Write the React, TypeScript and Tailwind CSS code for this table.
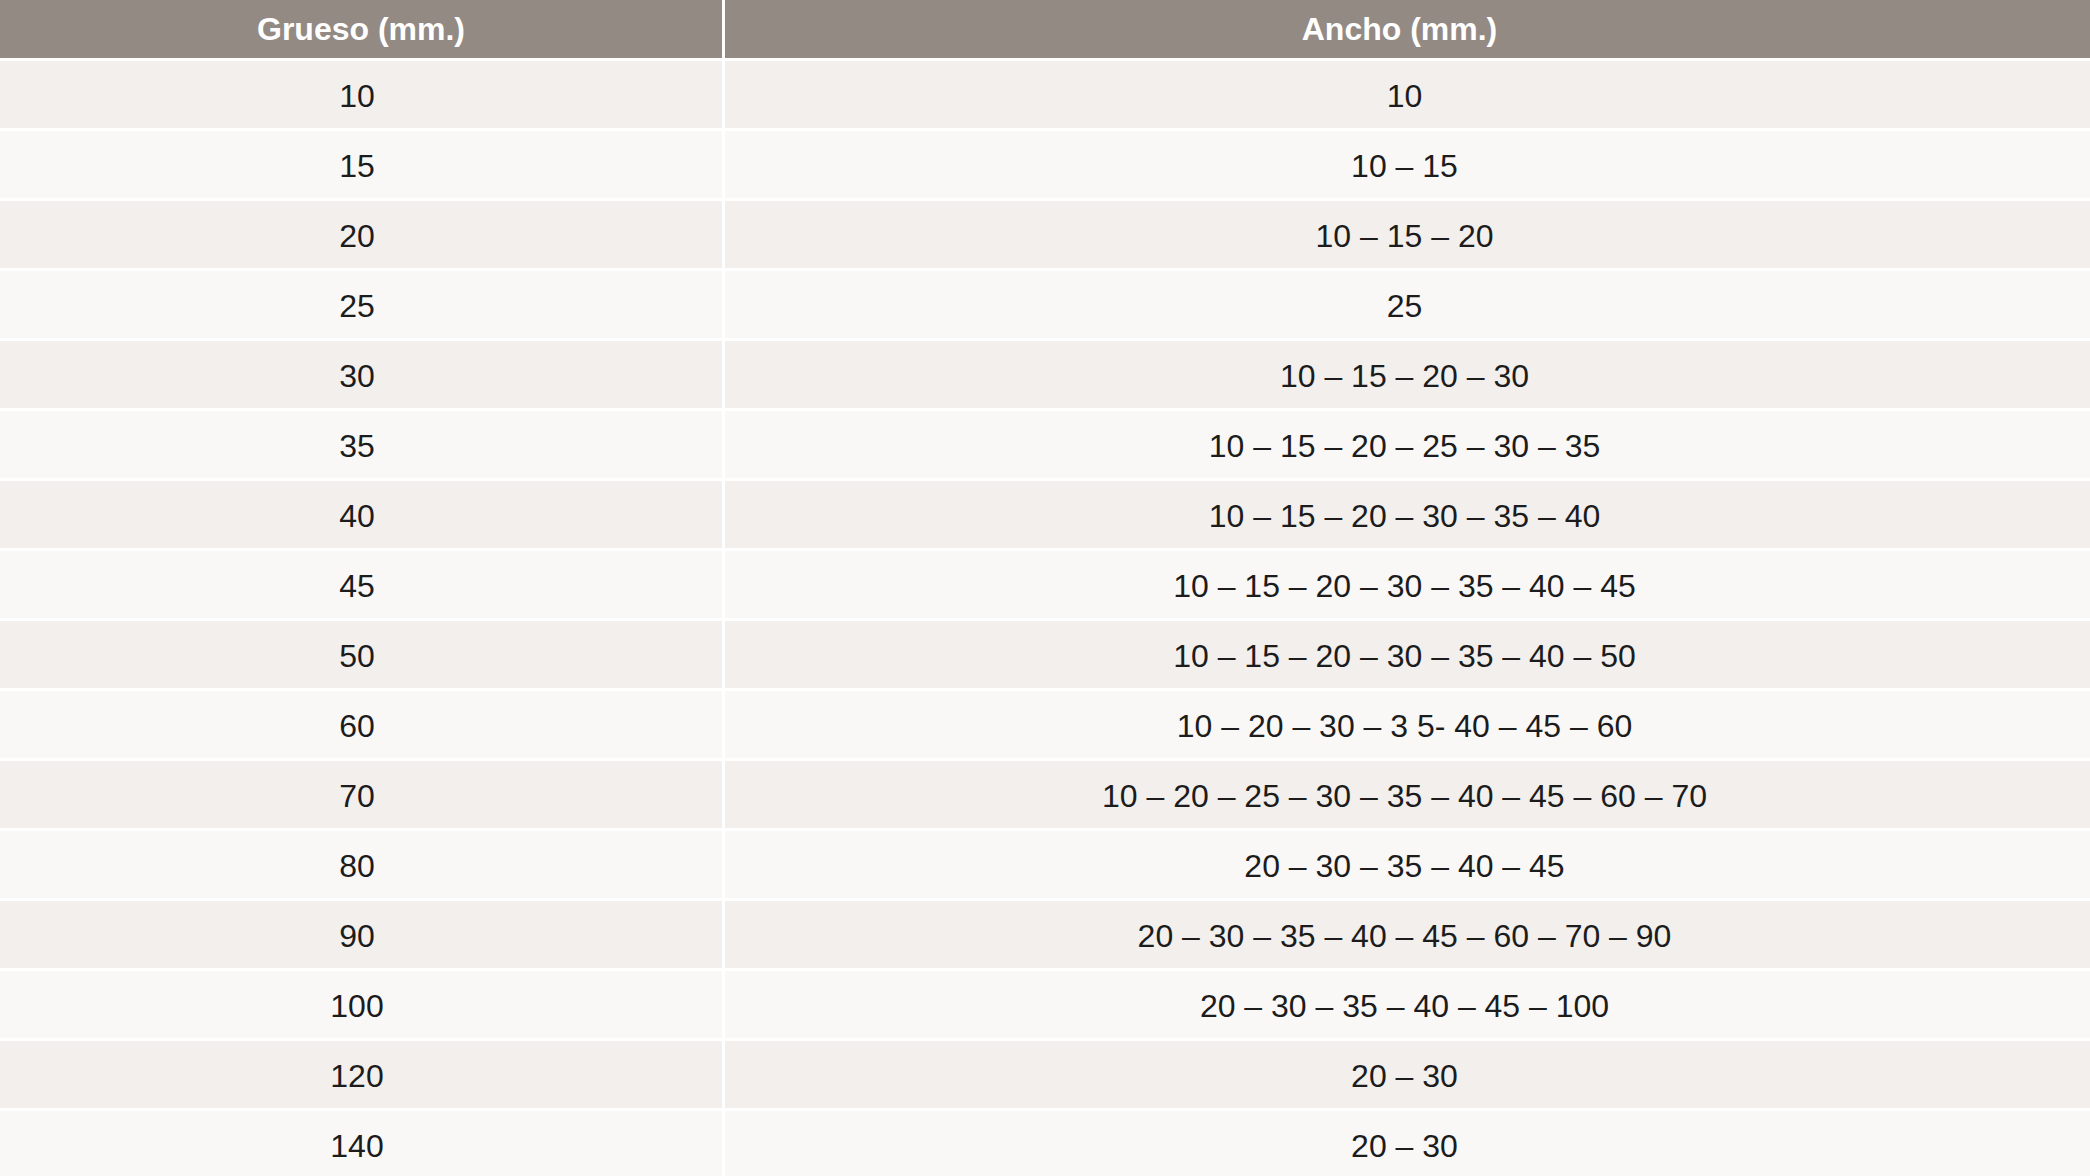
const rows: [string, string][] = [
  ["10", "10"],
  ["15", "10 – 15"],
  ["20", "10 – 15 – 20"],
  ["25", "25"],
  ["30", "10 – 15 – 20 – 30"],
  ["35", "10 – 15 – 20 – 25 – 30 – 35"],
  ["40", "10 – 15 – 20 – 30 – 35 – 40"],
  ["45", "10 – 15 – 20 – 30 – 35 – 40 – 45"],
  ["50", "10 – 15 – 20 – 30 – 35 – 40 – 50"],
  ["60", "10 – 20 – 30 – 3 5- 40 – 45 – 60"],
  ["70", "10 – 20 – 25 – 30 – 35 – 40 – 45 – 60 – 70"],
  ["80", "20 – 30 – 35 – 40 – 45"],
  ["90", "20 – 30 – 35 – 40 – 45 – 60 – 70 – 90"],
  ["100", "20 – 30 – 35 – 40 – 45 – 100"],
  ["120", "20 – 30"],
  ["140", "20 – 30"],
]

export default function App() {
  return (
    <div className="w-[2090px] h-[1176px] overflow-hidden bg-white flex flex-col gap-[3px] font-['Liberation_Sans',Arial,sans-serif]">
      {/* Header */}
      <div className="grid grid-cols-[722px_1365px] gap-x-[3px] h-[58px] shrink-0">
        <div className="bg-[#938a84] flex items-center justify-center text-white font-bold text-[32px]">
          Grueso (mm.)
        </div>
        <div className="bg-[#938a84] flex items-center justify-center pr-4 text-white font-bold text-[32px]">
          Ancho (mm.)
        </div>
      </div>

      {/* Body */}
      {rows.map(([grueso, ancho], i) => {
        const bg = i % 2 === 0 ? "bg-[#f2efec]" : "bg-[#f9f8f7]"
        return (
          <div key={grueso} className="grid grid-cols-[722px_1365px] gap-x-[3px] h-[67px] shrink-0">
            <div className={`${bg} flex items-center justify-center pt-[2px] pr-2 text-[#1c1c1c] text-[32px]`}>
              {grueso}
            </div>
            <div className={`${bg} flex items-center justify-center pt-[2px] pr-[6px] text-[#1c1c1c] text-[32px]`}>
              {ancho}
            </div>
          </div>
        )
      })}
    </div>
  )
}
